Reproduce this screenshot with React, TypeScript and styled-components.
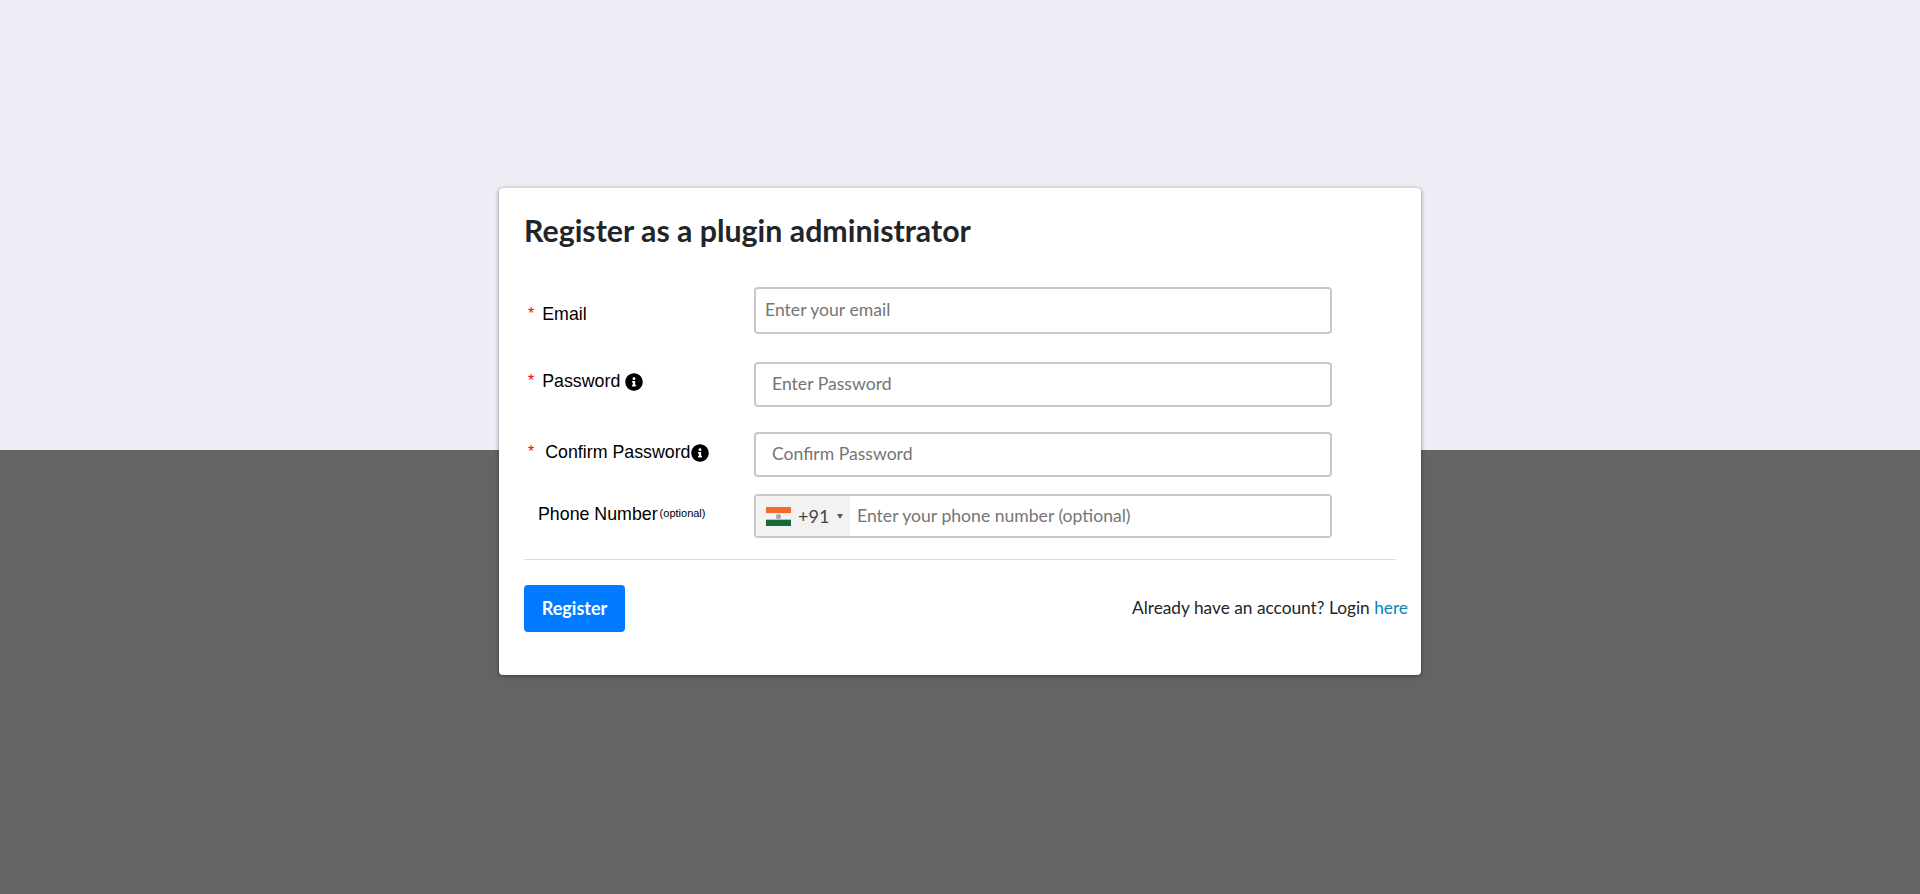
import styled, { createGlobalStyle } from 'styled-components';
import { FaInfoCircle } from 'react-icons/fa';

const GlobalStyle = createGlobalStyle`
  * {
    box-sizing: border-box;
  }

  html,
  body {
    margin: 0;
    padding: 0;
  }

  body {
    font-family: 'Lato', sans-serif;
    color: #212529;
  }
`;

const IndiaFlag = () => (
  <svg width='25' height='19' viewBox='0 0 25 19' aria-hidden='true'>
    <rect width='25' height='6.33' fill='#f26b2c' />
    <rect y='6.33' width='25' height='6.34' fill='#f4f4f4' />
    <rect y='12.67' width='25' height='6.33' fill='#14693c' />
    <circle cx='12.5' cy='9.5' r='2.6' fill='#a5a5c4' />
  </svg>
);

const App = () => {
  return (
    <Page>
      <GlobalStyle />
      <Card>
        <Title>Register as a plugin administrator</Title>

        <Form>
          <Row $height={47} $mb={28}>
            <Label $top={4}>
              <Star>*</Star>
              <LabelText $ml={8}>Email</LabelText>
            </Label>
            <Input placeholder='Enter your email' $pl={9} />
          </Row>

          <Row $height={45} $mb={25}>
            <Label $top={-3}>
              <Star>*</Star>
              <LabelText $ml={8}>Password</LabelText>
              <InfoIcon $ml={5} />
            </Label>
            <Input placeholder='Enter Password' $pl={16} />
          </Row>

          <Row $height={45} $mb={17}>
            <Label $top={-2}>
              <Star>*</Star>
              <LabelText $ml={11}>Confirm Password</LabelText>
              <InfoIcon $ml={0} />
            </Label>
            <Input placeholder='Confirm Password' $pl={16} />
          </Row>

          <Row $height={44} $mb={0}>
            <Label $top={-2}>
              <PhoneText>Phone Number</PhoneText>
              <Optional>(optional)</Optional>
            </Label>
            <PhoneField>
              <Dial>
                <IndiaFlag />
                <DialCode>+91</DialCode>
                <Caret />
              </Dial>
              <PhoneInput placeholder='Enter your phone number (optional)' />
            </PhoneField>
          </Row>
        </Form>

        <Divider />

        <Footer>
          <RegisterButton type='button'>Register</RegisterButton>
          <LoginText>
            Already have an account? Login <LoginLink href='#'>here</LoginLink>
          </LoginText>
        </Footer>
      </Card>
    </Page>
  );
};

const Page = styled.div`
  min-height: 100vh;
  padding-top: 188px;
  display: flex;
  justify-content: center;
  align-items: flex-start;
  background: linear-gradient(to bottom, #ecedf5 450px, #656364 450px);
`;

const Card = styled.div`
  width: 922px;
  height: 487px;
  padding: 24px 25px 0;
  background-color: #fff;
  border-radius: 4px;
  box-shadow: 0 1px 4px rgba(0, 0, 0, 0.45);
`;

const Title = styled.h1`
  margin: 0 0 39px;
  font-size: 30.3px;
  line-height: 36px;
  font-weight: 700;
  color: #212529;
`;

const Form = styled.div`
  display: flex;
  flex-direction: column;
`;

const Row = styled.div<{ $height: number; $mb: number }>`
  display: grid;
  grid-template-columns: 230px 578px;
  height: ${({ $height }) => $height}px;
  margin-bottom: ${({ $mb }) => $mb}px;
`;

const Label = styled.div<{ $top: number }>`
  display: flex;
  align-items: center;
  padding-left: 4px;
  transform: translateY(${({ $top }) => $top}px);
  font-family: 'Liberation Sans', Arial, sans-serif;
  font-size: 17.8px;
  color: #000;
`;

const Star = styled.span`
  color: #f00;
  font-size: 16px;
  line-height: 1;
  transform: translateY(-1px);
`;

const LabelText = styled.span<{ $ml: number }>`
  margin-left: ${({ $ml }) => $ml}px;
`;

const PhoneText = styled.span`
  margin-left: 10px;
`;

const Optional = styled.span`
  margin-left: 2px;
  font-size: 11px;
  transform: translateY(-1px);
`;

const InfoIcon = styled(FaInfoCircle)<{ $ml: number }>`
  margin-left: ${({ $ml }) => $ml}px;
  width: 18px;
  height: 18px;
  color: #000;
`;

const Input = styled.input<{ $pl: number }>`
  width: 100%;
  height: 100%;
  padding: 0 12px 2px ${({ $pl }) => $pl}px;
  border: 2px solid #c8c8c8;
  border-radius: 4px;
  background: #fff;
  font-family: 'Lato', sans-serif;
  font-size: 17.6px;
  color: #495057;
  outline: none;

  &::placeholder {
    color: #757575;
    opacity: 1;
  }
`;

const PhoneField = styled.div`
  display: flex;
  height: 100%;
  border: 2px solid #c8c8c8;
  border-radius: 4px;
  overflow: hidden;
`;

const Dial = styled.div`
  width: 94px;
  flex: 0 0 auto;
  display: flex;
  align-items: center;
  padding-left: 10px;
  background-color: #f2f2f2;
`;

const DialCode = styled.span`
  margin-left: 7px;
  font-size: 18px;
  color: #444;
`;

const Caret = styled.span`
  margin-left: 8px;
  width: 0;
  height: 0;
  border-left: 3px solid transparent;
  border-right: 3px solid transparent;
  border-top: 5px solid #555;
`;

const PhoneInput = styled.input`
  flex: 1;
  min-width: 0;
  padding: 0 7px 2px;
  border: none;
  background: #fff;
  font-family: 'Lato', sans-serif;
  font-size: 17.6px;
  outline: none;

  &::placeholder {
    color: #757575;
    opacity: 1;
  }
`;

const Divider = styled.hr`
  width: 872px;
  margin: 21px 0 25px;
  border: none;
  border-top: 1px solid #dcdcdc;
`;

const Footer = styled.div`
  display: flex;
  align-items: center;
  justify-content: space-between;
  margin-right: -12px;
`;

const RegisterButton = styled.button`
  width: 101px;
  height: 47px;
  padding: 0 0 2px;
  border: none;
  border-radius: 4px;
  background-color: #007bff;
  color: #fff;
  font-family: 'Lato', sans-serif;
  font-size: 18px;
  font-weight: 700;
`;

const LoginText = styled.span`
  margin-bottom: 2px;
  font-size: 17.3px;
  color: #212529;
`;

const LoginLink = styled.a`
  color: #0a84b5;
  text-decoration: none;
`;

export default App;
